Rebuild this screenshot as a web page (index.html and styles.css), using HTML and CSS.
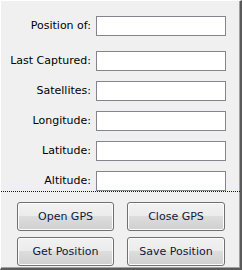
FILE: index.html
```html
<!DOCTYPE html>
<html lang="en">
<head>
  <meta charset="UTF-8">
  <meta name="viewport" content="width=device-width, initial-scale=1.0">
  <title>GPS Position</title>
  <link rel="stylesheet" href="styles.css">
</head>
<body>
  <div class="frame">
    <div class="fields">
      <label>Position of:</label>
      <input type="text">
      <label>Last Captured:</label>
      <input type="text">
      <label>Satellites:</label>
      <input type="text">
      <label>Longitude:</label>
      <input type="text">
      <label>Latitude:</label>
      <input type="text">
      <label>Altitude:</label>
      <input type="text">
    </div>

    <div class="buttons">
      <button class="btn">Open GPS</button>
      <button class="btn">Close GPS</button>
      <button class="btn">Get Position</button>
      <button class="btn">Save Position</button>
    </div>
  </div>
</body>
</html>
```

FILE: styles.css
```css
body {
  margin: 0;
  font-family: "DejaVu Sans", Verdana, sans-serif;
  font-size: 11px;
}
.frame {
  box-sizing: border-box;
  width: 242px;
  height: 270px;
  background-color: #f0f0f0;
  border-top: 1px solid #ffffff;
  border-left: 1px solid #ffffff;
  border-right: 2px solid #5a5a5a;
  border-bottom: 2px solid #5a5a5a;
  box-shadow: inset -1px -1px 0 #a0a0a0;
}
.fields {
  display: grid;
  grid-template-columns: 90px 130px;
  grid-template-rows: 25px repeat(5, 20px);
  column-gap: 5px;
  row-gap: 10px;
  align-items: start;
  padding-top: 15px;
  border-bottom: 1px dotted #0000b0;
}
.fields label {
  text-align: right;
  line-height: 20px;
  color: #000;
}
.fields input {
  box-sizing: border-box;
  height: 20px;
  margin: 0;
  padding: 0 3px;
  border: 1px solid #82868c;
  background: #fff;
  font: inherit;
}
.buttons {
  display: grid;
  grid-template-columns: 97px 98px;
  grid-auto-rows: 29px;
  column-gap: 13px;
  row-gap: 6px;
  padding: 10px 0 0 16px;
}
.btn {
  margin: 0;
  padding: 0;
  border: 1px solid #707070;
  border-radius: 3px;
  background: linear-gradient(#f2f2f2 0%, #ebebeb 50%, #dddddd 50%, #cfcfcf 100%);
  box-shadow: inset 0 0 0 1px #fcfcfc;
  font: inherit;
  color: #0c1a3c;
  cursor: pointer;
}
.btn:hover {
  background: linear-gradient(#eaf6fd 0%, #d9f0fc 50%, #bee6fd 50%, #a7d9f5 100%);
  border-color: #3c7fb1;
}
```
